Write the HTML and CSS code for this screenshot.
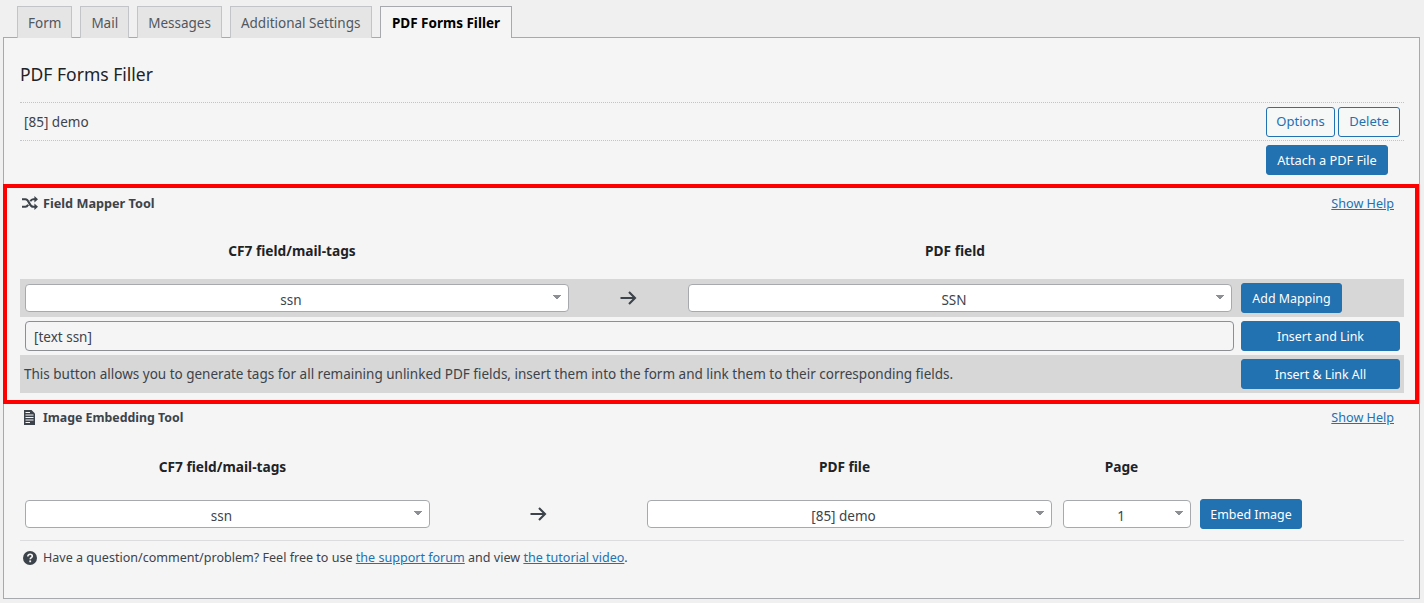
FILE: index.html
```html
<!DOCTYPE html>
<html lang="en">
<head>
<meta charset="utf-8">
<title>PDF Forms Filler</title>
<link rel="stylesheet" href="styles.css">
</head>
<body>
<nav class="tabs">
  <a class="tab">Form</a>
  <a class="tab">Mail</a>
  <a class="tab">Messages</a>
  <a class="tab tab-settings">Additional Settings</a>
  <a class="tab tab-active">PDF Forms Filler</a>
</nav>
<main class="panel">
  <h2 class="title">PDF Forms Filler</h2>
  <div class="attachment">
    <span>[85] demo</span>
    <div class="attachment-actions">
      <button class="btn btn-outline btn-options">Options</button>
      <button class="btn btn-outline btn-delete">Delete</button>
    </div>
  </div>
  <div class="attach-row">
    <button class="btn btn-primary btn-attach">Attach a PDF File</button>
  </div>

  <section class="tool tool-mapper">
    <div class="tool-head">
      <span class="tool-title">
        <svg class="icon" viewBox="0 0 16 14" aria-hidden="true"><path d="M0 3.2H3.4C5.2 3.2 6 4.4 7.2 7S9.4 10.8 11.2 10.8H13.5M0 10.8H3.4C4.7 10.8 5.5 10 6.2 8.8M8.3 5.2C9 4 9.8 3.2 11.2 3.2H13.5" fill="none" stroke="#3c434a" stroke-width="2.1"/><path d="M12.4 0L16 3.2L12.4 6.4ZM12.4 7.6L16 10.8L12.4 14Z" fill="#3c434a"/></svg>
        Field Mapper Tool
      </span>
      <a class="link help-link">Show Help</a>
    </div>
    <div class="map-heads">
      <div class="col-field">CF7 field/mail-tags</div>
      <div class="col-arrow"></div>
      <div class="col-field">PDF field</div>
    </div>
    <div class="grey-row map-row">
      <div class="col-field"><select class="select"><option>ssn</option></select></div>
      <div class="col-arrow arrow">
        <svg class="arrow-icon" viewBox="0 0 17 14" aria-hidden="true"><path d="M0.5 7H15M9 1L15 7L9 13" fill="none" stroke="#3c434a" stroke-width="2.1"/></svg>
      </div>
      <div class="col-field"><select class="select"><option>SSN</option></select></div>
      <div class="col-btn"><button class="btn btn-primary btn-map">Add Mapping</button></div>
    </div>
    <div class="insert-row">
      <input class="text-input" type="text" value="[text ssn]">
      <button class="btn btn-primary btn-wide">Insert and Link</button>
    </div>
    <div class="grey-row all-row">
      <span>This button allows you to generate tags for all remaining unlinked PDF fields, insert them into the form and link them to their corresponding fields.</span>
      <button class="btn btn-primary btn-wide">Insert &amp; Link All</button>
    </div>
    <div class="highlight"></div>
  </section>

  <section class="tool tool-image">
    <div class="tool-head">
      <span class="tool-title">
        <svg class="icon icon-doc" viewBox="0 0 11 15" aria-hidden="true"><path d="M0 0H7.5L11 3.5V15H0Z" fill="#3c434a"/><path d="M1.5 2.5H6M1.5 5H9.5M1.5 7.5H9.5M1.5 10H9.5M1.5 12.5H6" stroke="#f5f5f5" stroke-width="1"/></svg>
        Image Embedding Tool
      </span>
      <a class="link help-link">Show Help</a>
    </div>
    <div class="embed-heads">
      <div>CF7 field/mail-tags</div>
      <div></div>
      <div>PDF file</div>
      <div>Page</div>
    </div>
    <div class="embed-row">
      <select class="select"><option>ssn</option></select>
      <div class="arrow">
        <svg class="arrow-icon" viewBox="0 0 17 14" aria-hidden="true"><path d="M0.5 7H15M9 1L15 7L9 13" fill="none" stroke="#3c434a" stroke-width="2.1"/></svg>
      </div>
      <select class="select"><option>[85] demo</option></select>
      <select class="select select-page"><option>1</option></select>
      <button class="btn btn-primary btn-embed">Embed Image</button>
    </div>
  </section>

  <footer class="foot">
    <svg class="help" viewBox="0 0 14 14" aria-hidden="true"><circle cx="7" cy="7" r="7" fill="#3c434a"/><path d="M4.8 5.4C4.8 4.1 5.8 3.3 7.1 3.3S9.3 4.1 9.3 5.2C9.3 6.6 7.2 6.7 7.2 8.3" fill="none" stroke="#f5f5f5" stroke-width="1.6"/><rect x="6.3" y="9.4" width="1.8" height="1.8" fill="#f5f5f5"/></svg>
    <span class="foot-text">Have a question/comment/problem? Feel free to use <a class="link">the support forum</a> and view <a class="link">the tutorial video</a>.</span>
  </footer>
</main>
</body>
</html>
```

FILE: styles.css
```css
* { box-sizing: border-box; }
html, body { margin: 0; height: 100%; }
body {
  background: #f0f0f1;
  color: #3c434a;
  font-family: "Noto Sans", sans-serif;
  font-size: 13.5px;
  overflow: hidden;
  padding: 6px 4px 0 3px;
}
.tabs { display: flex; gap: 8px; padding-left: 14px; height: 32px; position: relative; z-index: 1; }
.tab {
  height: 32px;
  padding: 0 10px;
  display: flex;
  align-items: center;
  border: 1px solid #c3c4c7;
  border-bottom: 0;
  background: #e5e5e5;
  color: #50575e;
  font-size: 13.5px;
}
.tab-settings { width: 142px; }
.tab-active {
  padding: 0 11px;
  background: #f5f5f5;
  border-color: #a7aaad;
  color: #000;
  font-weight: 700;
  font-size: 13.5px;
}
.panel {
  height: 562px;
  margin-top: -1px;
  border: 1px solid #a7aaad;
  background: #f5f5f5;
  padding: 0 15px 0 16px;
}
.title { margin: 0; height: 64px; padding-top: 24px; font-size: 17.5px; line-height: 24px; font-weight: 400; color: #1d2327; }
.attachment {
  height: 39px;
  border-top: 1px dotted #c3c4c7;
  border-bottom: 1px dotted #c3c4c7;
  display: flex;
  align-items: center;
  justify-content: space-between;
  padding: 0 4px;
}
.attachment-actions { display: flex; gap: 3px; }
.attach-row { height: 43px; padding: 4px 0 0 1246px; }
.btn {
  font: inherit;
  font-size: 12.4px;
  height: 30px;
  padding: 0;
  border-radius: 3px;
  border: 1px solid #2271b1;
  cursor: pointer;
  white-space: nowrap;
}
.btn-primary { background: #2271b1; color: #fff; }
.btn-outline { background: #f6f7f7; color: #2271b1; font-size: 13px; padding-bottom: 1px; }
.btn-options { width: 69px; }
.btn-delete { width: 62px; }
.btn-attach { width: 122px; font-size: 12.75px; padding-bottom: 1px; }
.btn-wide { width: 159px; flex: none; }
.btn-map { width: 101px; }
.btn-embed { width: 102px; }
.tool { position: relative; }
.tool-head { height: 38px; display: flex; justify-content: space-between; align-items: center; padding: 0 10px 0 2px; }
.tool-title { display: flex; align-items: center; gap: 5px; font-size: 12.7px; font-weight: 700; color: #3c434a; }
.tool-image .tool-title { font-size: 12.35px; gap: 8px; }
.help-link { font-size: 12.6px; }
.icon { width: 16px; height: 14px; }
.icon-doc { width: 11px; height: 15px; margin-left: 2px; }
.link { color: #2271b1; text-decoration: underline; }
.map-heads { display: flex; height: 57px; align-items: center; font-weight: 700; font-size: 13.7px; color: #1d2327; text-align: center; }
.col-field { width: 544px; flex: none; }
.col-arrow { width: 119px; flex: none; }
.col-btn { flex: 1; padding-left: 9px; }
.grey-row { background: #d7d7d7; height: 38px; padding: 0 4px 0 5px; display: flex; align-items: center; }
.map-row .col-field { display: flex; }
.arrow { display: flex; justify-content: center; align-items: center; }
.arrow-icon { width: 17px; height: 14px; }
.select {
  appearance: none;
  width: 100%;
  height: 28px;
  border: 1px solid #a7aaad;
  border-radius: 4px;
  color: #3c434a;
  font: inherit;
  text-align: center;
  text-align-last: center;
  padding: 3px 12px 0 0;
  background-color: #fff;
  background-image: linear-gradient(to bottom left, #8c8f94 50%, transparent 50%), linear-gradient(to bottom right, #8c8f94 50%, transparent 50%);
  background-size: 4px 5px, 4px 5px;
  background-position: right 11px top 10px, right 7px top 10px;
  background-repeat: no-repeat;
}
.insert-row { height: 38px; display: flex; align-items: center; gap: 7px; padding: 0 4px 0 5px; }
.text-input {
  flex: 1;
  min-width: 0;
  height: 30px;
  border: 1px solid #8c8f94;
  border-radius: 4px;
  background: #f5f5f5;
  color: #3c434a;
  font: inherit;
  padding: 1px 8px 0;
}
.all-row { justify-content: space-between; padding-left: 4px; }
.highlight {
  position: absolute;
  left: -17px;
  right: -15px;
  top: 0;
  bottom: 0;
  border: 4px solid #f00;
  pointer-events: none;
}
.tool-mapper { height: 220px; }
.tool-image .tool-head { height: 26px; }
.embed-heads { display: grid; grid-template-columns: 405px 217px 405px 149px; align-items: center; height: 65px; padding-top: 8px; font-weight: 700; font-size: 13.7px; text-align: center; color: #1d2327; }
.embed-row { display: grid; grid-template-columns: 405px 217px 405px 139px auto; align-items: start; height: 46px; padding: 4px 5px 0; border-bottom: 1px solid #dcdcde; }
.embed-row .select { margin-top: 1px; }
.embed-row .arrow { height: 30px; }
.embed-row .select-page { margin-left: 11px; width: 128px; }
.embed-row .btn { margin-left: 9px; justify-self: start; }
.foot { display: flex; align-items: flex-start; gap: 6px; padding: 10px 0 0 3px; font-size: 12.55px; }
.foot-text { line-height: 14px; }
.help { width: 14px; height: 14px; flex: none; }
```
